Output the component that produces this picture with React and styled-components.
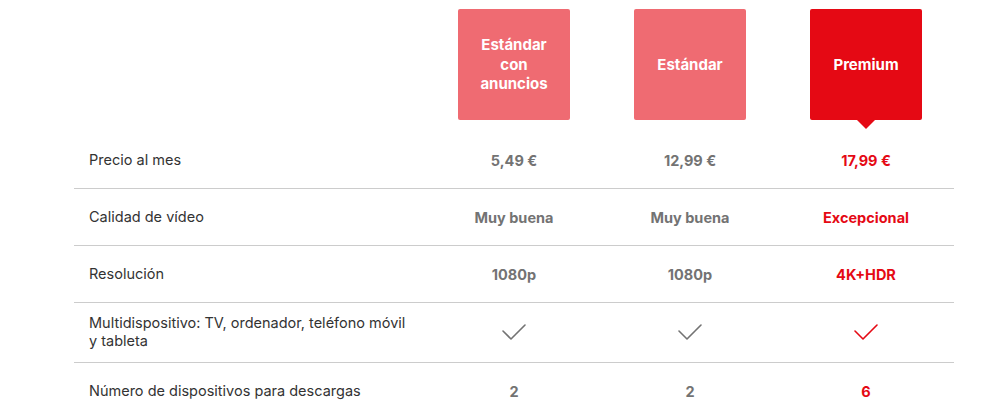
import styled, { createGlobalStyle } from "styled-components";

const GlobalStyle = createGlobalStyle`
  body {
    margin: 0;
    background: #fff;
    font-family: Inter, Roboto, "Liberation Sans", Arial, sans-serif;
  }
`;

const RED = "#e50914";
const PINK = "#ef6b72";

const plans = [
  { name: "Estándar con anuncios", selected: false },
  { name: "Estándar", selected: false },
  { name: "Premium", selected: true },
];

const rows = [
  { label: "Precio al mes", values: ["5,49 €", "12,99 €", "17,99 €"] },
  { label: "Calidad de vídeo", values: ["Muy buena", "Muy buena", "Excepcional"] },
  { label: "Resolución", values: ["1080p", "1080p", "4K+HDR"] },
  {
    label: "Multidispositivo: TV, ordenador, teléfono móvil y tableta",
    check: true,
  },
  { label: "Número de dispositivos para descargas", values: ["2", "2", "6"] },
];

const Page = styled.div`
  padding: 9px 0 0 74px;
`;

const Table = styled.div`
  display: grid;
  grid-template-columns: 352px repeat(3, 176px);
  width: 880px;
`;

const HeaderRow = styled.div`
  display: contents;
`;

const HeaderCell = styled.div`
  display: flex;
  justify-content: center;
  padding-bottom: 12px;
`;

const PlanBox = styled.div`
  position: relative;
  width: 112px;
  height: 111px;
  box-sizing: border-box;
  border-radius: 2px;
  background: ${(p) => (p.$selected ? RED : PINK)};
  color: #fff;
  font-weight: 700;
  font-size: 15px;
  line-height: 19.5px;
  display: flex;
  align-items: center;
  justify-content: center;
  text-align: center;
  padding: 0 16px;

  &::after {
    content: "";
    display: ${(p) => (p.$selected ? "block" : "none")};
    position: absolute;
    left: 50%;
    bottom: -9px;
    margin-left: -9px;
    border-left: 9px solid transparent;
    border-right: 9px solid transparent;
    border-top: 9px solid ${RED};
  }
`;

const Row = styled.div`
  display: contents;

  & > div {
    border-bottom: ${(p) => (p.$last ? "none" : "1px solid #cccccc")};
  }
`;

const LabelCell = styled.div`
  box-sizing: border-box;
  min-height: 57px;
  padding: 11px 10px 12px 15px;
  display: flex;
  align-items: center;
  font-size: 14.5px;
  line-height: 18px;
  color: #333;
`;

const ValueCell = styled.div`
  box-sizing: border-box;
  min-height: 57px;
  display: flex;
  align-items: center;
  justify-content: center;
  font-size: 14.5px;
  font-weight: 700;
  color: ${(p) => (p.$selected ? RED : "#737373")};
`;

const Check = ({ color }) => (
  <svg width="24" height="24" viewBox="0 0 24 24" fill="none">
    <polyline
      points="1,10 9,18 23,4"
      stroke={color}
      strokeWidth="1.6"
      strokeLinecap="round"
      strokeLinejoin="round"
    />
  </svg>
);

export default function App() {
  return (
    <>
      <GlobalStyle />
      <Page>
        <Table>
          <HeaderRow>
            <div />
            {plans.map((plan) => (
              <HeaderCell key={plan.name}>
                <PlanBox $selected={plan.selected}>{plan.name}</PlanBox>
              </HeaderCell>
            ))}
          </HeaderRow>
          {rows.map((row, i) => (
            <Row key={row.label} $last={i === rows.length - 1}>
              <LabelCell>
                {row.label}
              </LabelCell>
              {plans.map((plan, j) => (
                <ValueCell key={plan.name} $selected={plan.selected}>
                  {row.check ? (
                    <Check color={plan.selected ? RED : "#737373"} />
                  ) : (
                    row.values[j]
                  )}
                </ValueCell>
              ))}
            </Row>
          ))}
        </Table>
      </Page>
    </>
  );
}
